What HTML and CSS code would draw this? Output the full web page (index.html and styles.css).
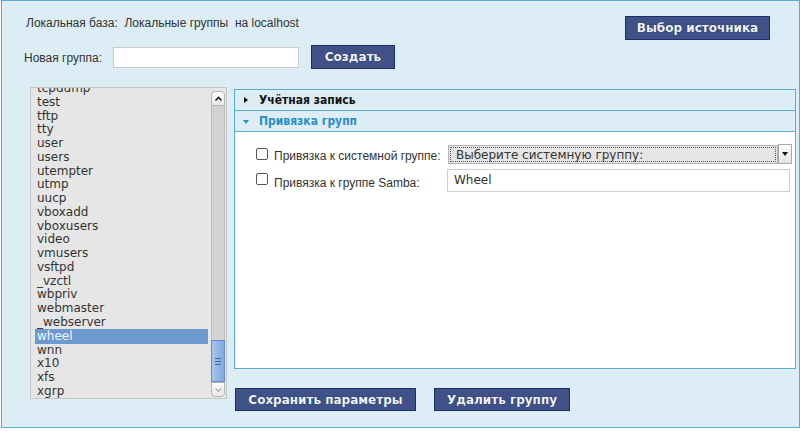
FILE: index.html
```html
<!DOCTYPE html>
<html lang="ru">
<head>
<meta charset="utf-8">
<title>Локальные группы</title>
<link rel="stylesheet" href="styles.css">
</head>
<body>
<div class="frame">
  <div class="top">
    <div class="top-left">
      <div class="info">Локальная база:&nbsp; Локальные группы&nbsp; на localhost</div>
      <div class="newgroup">
        <span class="ng-label">Новая группа:</span>
        <span class="text-input ng-input"></span>
        <span class="btn btn-create">Создать</span>
      </div>
    </div>
    <span class="btn btn-source">Выбор источника</span>
  </div>
  <div class="main">
    <div class="listbox">
      <ul class="list">
        <li>tcpdump</li>
        <li>test</li>
        <li>tftp</li>
        <li>tty</li>
        <li>user</li>
        <li>users</li>
        <li>utempter</li>
        <li>utmp</li>
        <li>uucp</li>
        <li>vboxadd</li>
        <li>vboxusers</li>
        <li>video</li>
        <li>vmusers</li>
        <li>vsftpd</li>
        <li>_vzctl</li>
        <li>wbpriv</li>
        <li>webmaster</li>
        <li>_webserver</li>
        <li class="selected">wheel</li>
        <li>wnn</li>
        <li>x10</li>
        <li>xfs</li>
        <li>xgrp</li>
      </ul>
      <div class="scrollbar">
        <div class="sb-btn sb-up">
          <svg width="9" height="6" viewBox="0 0 9 6"><path d="M1.5 4.5 L4.5 1.5 L7.5 4.5" fill="none" stroke="#222" stroke-width="1.6"/></svg>
        </div>
        <div class="sb-track"></div>
        <div class="sb-thumb">
          <span class="grip"></span><span class="grip"></span><span class="grip"></span>
        </div>
        <div class="sb-btn sb-down">
          <svg width="9" height="6" viewBox="0 0 9 6"><path d="M1.5 1.5 L4.5 4.5 L7.5 1.5" fill="none" stroke="#aaa" stroke-width="1.2"/></svg>
        </div>
      </div>
    </div>
    <div class="right">
      <div class="panel">
        <div class="section">
          <span class="tri-right"></span>
          <span class="section-title">Учётная запись</span>
        </div>
        <div class="section open">
          <span class="tri-down"></span>
          <span class="section-title">Привязка групп</span>
        </div>
        <div class="content">
          <div class="row row-select">
            <span class="checkbox"></span>
            <span class="label">Привязка к системной группе:</span>
            <div class="select">
              <div class="select-box"><span class="select-focus">Выберите системную группу:</span></div>
              <div class="select-btn"><span class="arrow-down"></span></div>
            </div>
          </div>
          <div class="row row-input">
            <span class="checkbox"></span>
            <span class="label">Привязка к группе Samba:</span>
            <span class="text-input samba-input">Wheel</span>
          </div>
        </div>
      </div>
      <div class="actions">
        <span class="btn btn-save">Сохранить параметры</span>
        <span class="btn btn-delete">Удалить группу</span>
      </div>
    </div>
  </div>
</div>
</body>
</html>
```

FILE: styles.css
```css
html, body {
  margin: 0;
  padding: 0;
  background: #ffffff;
}

body {
  font-family: "Liberation Sans", Arial, sans-serif;
  font-size: 12px;
  color: #333333;
}

.frame {
  box-sizing: border-box;
  width: 799px;
  height: 428px;
  margin-left: 1px;
  border: 1px solid #58acd8;
  background: #dcedf5;
  display: flex;
  flex-direction: column;
}

/* top area */
.top {
  display: flex;
  justify-content: space-between;
  align-items: flex-start;
  padding: 0 29px 0 22px;
}

.info {
  margin-top: 15px;
  margin-left: 2px;
  line-height: 15px;
  color: #333;
}

.newgroup {
  display: flex;
  align-items: center;
  margin-top: 14px;
  height: 24px;
}

.ng-label {
  width: 89px;
  padding-top: 2px;
}

.text-input {
  box-sizing: border-box;
  display: block;
  background: #ffffff;
  border: 1px solid #c9c9c9;
}

.ng-input {
  width: 186px;
  height: 21px;
}

.btn {
  box-sizing: border-box;
  display: flex;
  align-items: center;
  justify-content: center;
  background: #3f5186;
  border: 1px solid #1c2d68;
  color: #eef2f8;
  font-family: "DejaVu Sans", sans-serif;
  font-weight: bold;
  font-size: 12px;
  text-shadow: 0 0 1px #1a2450;
}

.btn-create {
  margin-left: 12px;
  width: 84px;
  height: 24px;
}

.btn-source {
  margin-top: 15px;
  width: 145px;
  height: 24px;
}

/* main area */
.main {
  display: flex;
  align-items: flex-start;
  padding-left: 28px;
  margin-top: 18px;
}

.listbox {
  box-sizing: border-box;
  width: 197px;
  height: 312px;
  background: #e6e6e6;
  border: 1px solid #c6c6c6;
  display: flex;
  overflow: hidden;
}

.list {
  list-style: none;
  margin: -6px 0 0 0;
  padding: 0 0 0 4px;
  flex: 1;
  font-family: "DejaVu Sans", sans-serif;
  font-size: 12px;
  line-height: 13.76px;
  color: #333333;
}

.list li {
  padding-left: 2px;
  margin-right: 3px;
  white-space: nowrap;
}

.list li.selected {
  background: #6d99cf;
  color: #f2f6fc;
  height: 14.4px;
  line-height: 14.4px;
  margin-top: -0.3px;
  margin-bottom: -0.34px;
}

.scrollbar {
  width: 14px;
  margin: 3px 1px 1px 0;
  align-self: stretch;
  display: flex;
  flex-direction: column;
}

.sb-btn {
  box-sizing: border-box;
  height: 15px;
  display: flex;
  align-items: center;
  justify-content: center;
  border: 1px solid #b4b4b4;
  background: linear-gradient(#fbfbfb, #e8e8e8);
}

.sb-up {
  border-radius: 4px 4px 0 0;
}

.sb-down {
  border-radius: 0 0 4px 4px;
}

.sb-track {
  flex: 1;
  background: #d2d2d2;
  border-left: 1px solid #bcbcbc;
  border-right: 1px solid #bcbcbc;
}

.sb-thumb {
  box-sizing: border-box;
  height: 42px;
  background: linear-gradient(90deg, #a9c6ea, #8db4e4 60%, #80a9dc);
  border: 1px solid #5f8fca;
  display: flex;
  flex-direction: column;
  align-items: center;
  justify-content: center;
  gap: 2px;
}

.grip {
  display: block;
  width: 6px;
  height: 1px;
  background: #45679a;
}

/* right column */
.right {
  margin-left: 7px;
  margin-top: 2px;
  display: flex;
  flex-direction: column;
}

.panel {
  box-sizing: border-box;
  width: 562px;
  height: 280px;
  border: 1px solid #58acd8;
  background: #ffffff;
}

.section {
  box-sizing: border-box;
  height: 21px;
  border-bottom: 1px solid #58acd8;
  background: #dcedf5;
  display: flex;
  align-items: center;
  padding-left: 8px;
}

.section-title {
  font-family: "DejaVu Sans Condensed", "DejaVu Sans", sans-serif;
  font-weight: bold;
  font-size: 12px;
  color: #111111;
  margin-left: 11px;
}

.open .section-title {
  color: #2b8cc9;
  margin-left: 10px;
}

.tri-right {
  width: 0;
  height: 0;
  border-top: 3.5px solid transparent;
  border-bottom: 3.5px solid transparent;
  border-left: 4px solid #111;
  margin-left: 1px;
}

.tri-down {
  width: 0;
  height: 0;
  border-left: 3.5px solid transparent;
  border-right: 3.5px solid transparent;
  border-top: 4px solid #2b8cc9;
  margin-top: 1px;
}

.content {
  padding: 12px 3px 0 21px;
}

.row {
  display: grid;
  grid-template-columns: 12px 168px 1fr;
  column-gap: 6px;
  align-items: center;
}

.row-select {
  height: 20px;
}

.row-input {
  margin-top: 5px;
  height: 23px;
}

.checkbox {
  box-sizing: border-box;
  display: block;
  width: 12px;
  height: 12px;
  border: 1px solid #555;
  border-radius: 2px;
  background: #ffffff;
}

.row-input .checkbox {
  margin-top: -3px;
}

.label {
  color: #333;
  padding-top: 3px;
}

.row-input .label {
  padding-top: 4px;
}

.select {
  display: flex;
  height: 20px;
  font-family: "DejaVu Sans", sans-serif;
  font-size: 12px;
}

.select-box {
  box-sizing: border-box;
  width: 330px;
  height: 19px;
  margin-top: 1px;
  border: 1px solid #b2b2b2;
  background: #e6e6e6;
  padding: 1px;
}

.select-focus {
  box-sizing: border-box;
  display: block;
  height: 15px;
  border: 1px dotted #555;
  padding-left: 5px;
  line-height: 14px;
  color: #333;
}

.select-btn {
  box-sizing: border-box;
  width: 14px;
  height: 20px;
  border: 1px solid #a8a8a8;
  background: linear-gradient(#ffffff, #e4e4e4);
  display: flex;
  align-items: center;
  justify-content: center;
}

.arrow-down {
  width: 0;
  height: 0;
  border-left: 3.5px solid transparent;
  border-right: 3.5px solid transparent;
  border-top: 4px solid #111;
}

.samba-input {
  width: 343px;
  height: 23px;
  margin-left: -1px;
  padding-left: 6px;
  line-height: 20px;
  font-family: "DejaVu Sans", sans-serif;
  font-size: 12px;
  color: #333;
  border-color: #cfcfcf;
}

.actions {
  display: flex;
  gap: 18px;
  margin-top: 19px;
  padding-left: 1px;
}

.btn-save {
  width: 181px;
  height: 23px;
}

.btn-delete {
  width: 136px;
  height: 23px;
}
```
